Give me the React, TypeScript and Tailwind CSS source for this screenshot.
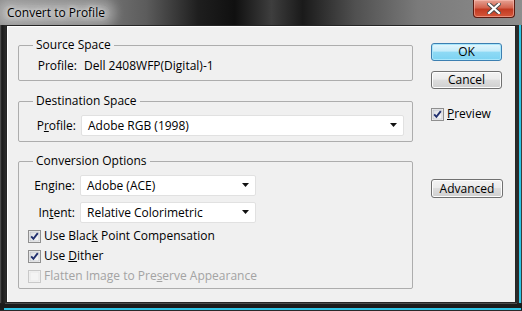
import { FC, ReactNode } from 'react';

// Vista-style checkbox, drawn as svg
const CheckBox: FC<{ checked?: boolean; disabled?: boolean }> = ({ checked, disabled }) => (
  <svg width="13" height="13" viewBox="0 0 13 13" className="shrink-0">
    <defs>
      <linearGradient id="cbIn" x1="0" y1="0" x2="1" y2="1">
        <stop offset="0" stopColor="#d8dbe0" />
        <stop offset="1" stopColor="#fbfbfb" />
      </linearGradient>
    </defs>
    <rect x="0.5" y="0.5" width="12" height="12" fill="#f4f4f4" stroke={disabled ? '#c9c9c9' : '#8f8f8f'} />
    <rect x="2" y="2" width="9" height="9" fill={disabled ? '#f4f4f4' : 'url(#cbIn)'} stroke={disabled ? '#e2e2e2' : '#b5b9c0'} strokeWidth="0.6" />
    {checked && (
      <path d="M3.2 6.4 L5.4 8.8 L9.8 3.2" fill="none" stroke="#21306f" strokeWidth="1.9" strokeLinejoin="miter" />
    )}
  </svg>
);

const Select: FC<{ value: string; className: string }> = ({ value, className }) => (
  <div
    className={`h-[21px] flex items-center bg-white border border-[#e1e1e1] rounded-[2px] pl-[6px] pr-[5px] ${className}`}
  >
    <span className="flex-1 text-black">{value}</span>
    <svg width="8" height="5" viewBox="0 0 8 5">
      <path d="M0 0 H7 L3.5 4 Z" fill="#111" />
    </svg>
  </div>
);

const Group: FC<{ title: string; className?: string; children: ReactNode }> = ({ title, className = '', children }) => (
  <fieldset className={`border border-[#adadad] rounded-[2px] px-0 ${className}`}>
    <legend className="ml-[14px] px-[3px] leading-[16px] text-black">{title}</legend>
    {children}
  </fieldset>
);

const Button: FC<{ label: ReactNode; primary?: boolean; className?: string }> = ({ label, primary, className = '' }) => (
  <div
    className={`h-[18px] w-[71px] flex items-center justify-center rounded-[3px] border leading-none text-black ${
      primary
        ? 'border-[#3c7fb1] bg-[linear-gradient(#e5f6fc,#c4ecfa_45%,#8fdaf5_50%,#7cd3f2)] shadow-[inset_0_0_0_1px_#a8e6fb]'
        : 'border-[#707070] bg-[linear-gradient(#f3f3f3,#ebebeb_45%,#dddddd_50%,#cfcfcf)] shadow-[inset_0_0_0_1px_#fcfcfc]'
    } ${className}`}
  >
    {label}
  </div>
);

const CheckRow: FC<{ checked?: boolean; disabled?: boolean; children: ReactNode }> = ({ checked, disabled, children }) => (
  <div className="h-[20px] flex items-center gap-[3px]">
    <CheckBox checked={checked} disabled={disabled} />
    <span className={disabled ? 'text-[#a3a3a3]' : 'text-black'}>{children}</span>
  </div>
);

export default function App() {
  return (
    <div className="w-[522px] h-[311px] flex flex-col bg-[#1d1d1d] font-['Segoe_UI','Open_Sans',sans-serif] text-[12px] overflow-hidden">
      {/* title bar */}
      <div className="h-[25px] shrink-0 flex items-start bg-[linear-gradient(90deg,#8c8c8c_0%,#7a7a7a_18%,#5c5c5c_28%,#1e1e1e_38%,#101010_45%,#3e3e3e_52%,#1a1a1a_58%,#505050_68%,#7a7a7a_80%,#8d8d8d_100%)]">
        <div className="mt-[5px] ml-[2px] px-[5px] rounded-full bg-[rgba(255,255,255,0.28)] shadow-[0_0_10px_6px_rgba(255,255,255,0.28)] text-black leading-[16px] [text-shadow:0_0_4px_#fff,0_0_8px_#fff]">
          Convert to Profile
        </div>
        <div className="ml-auto mr-[7px] w-[42px] h-[18px] flex items-center justify-center rounded-b-[4px] border border-t-0 border-[#5a1a10] bg-[linear-gradient(#e6a294,#d3644f_45%,#c23a22_55%,#d5573a)] shadow-[inset_0_0_0_1px_rgba(255,200,190,0.5)]">
          <svg width="14" height="11" viewBox="0 0 14 11">
            <path d="M2 1 L12 10 M12 1 L2 10" stroke="#4a4a4a" strokeWidth="4" strokeLinecap="square" />
            <path d="M2 1 L12 10 M12 1 L2 10" stroke="#fff" strokeWidth="2.2" strokeLinecap="square" />
          </svg>
        </div>
      </div>

      {/* body with frame */}
      <div className="flex h-[278px] shrink-0">
        <div className="w-[6px] bg-[linear-gradient(90deg,#5e5e5e,#1a1a1a_30%,#2c2c2c)]" />
        <div className="w-[510px] border border-[#252525] bg-[#f0f0f0] flex shadow-[inset_1px_1px_0_#ffffff]">
          {/* left column */}
          <div className="w-[395px] ml-[11px] pt-[11px] flex flex-col">
            <Group title="Source Space">
              <div className="pt-[5px] pb-[6px] flex items-center leading-[16px]">
                <span className="w-[58px] text-right">Profile:</span>
                <span className="ml-[7px]">Dell 2408WFP(Digital)-1</span>
              </div>
            </Group>

            <Group title="Destination Space" className="mt-[12px]">
              <div className="pt-[6px] pb-[5px] flex items-center">
                <span className="w-[57px] text-right">
                  P<span className="underline">r</span>ofile:
                </span>
                <Select value="Adobe RGB (1998)" className="ml-[5px] w-[323px]" />
              </div>
            </Group>

            <Group title="Conversion Options" className="mt-[11px]">
              <div className="pt-[6px] pb-[2px] flex flex-col">
                <div className="flex items-center">
                  <span className="w-[56px] text-right">
                    En<span className="underline">g</span>ine:
                  </span>
                  <Select value="Adobe (ACE)" className="ml-[5px] w-[176px]" />
                </div>
                <div className="flex items-center mt-[6px]">
                  <span className="w-[56px] text-right">
                    In<span className="underline">t</span>ent:
                  </span>
                  <Select value="Relative Colorimetric" className="ml-[5px] w-[176px]" />
                </div>
                <div className="mt-[3px] pl-[9px] flex flex-col">
                  <CheckRow checked>
                    Use Blac<span className="underline">k</span> Point Compensation
                  </CheckRow>
                  <CheckRow checked>
                    Use <span className="underline">D</span>ither
                  </CheckRow>
                  <CheckRow disabled>
                    Flatten Image to Pre<span className="underline">s</span>erve Appearance
                  </CheckRow>
                </div>
              </div>
            </Group>
          </div>

          {/* right column */}
          <div className="ml-[18px] pt-[17px] flex flex-col">
            <Button label="OK" primary />
            <Button label="Cancel" className="mt-[10px]" />
            <div className="mt-[17px] h-[16px] flex items-center gap-[3px]">
              <CheckBox checked />
              <span>
                <span className="underline">P</span>review
              </span>
            </div>
            <Button label="Advanced" className="mt-[57px] w-[72px] h-[19px]" />
          </div>
        </div>
        <div className="w-[6px] flex">
          <div className="w-[3px] bg-[#2a2a2a]" />
          <div className="w-[2px] bg-[#2fc3e4]" />
          <div className="w-[1px] bg-[#3a3a3a]" />
        </div>
      </div>

      {/* bottom frame */}
      <div className="flex-1 flex flex-col">
        <div className="h-[1px] bg-[#4a4a4a] mx-[5px]" />
        <div className="flex-1 bg-[#1b1b1b]" />
        <div className="h-[2px] bg-[#2fc3e4] ml-[4px] mr-[1px]" />
        <div className="h-[1px] bg-[#2a2a2a]" />
      </div>
    </div>
  );
}
